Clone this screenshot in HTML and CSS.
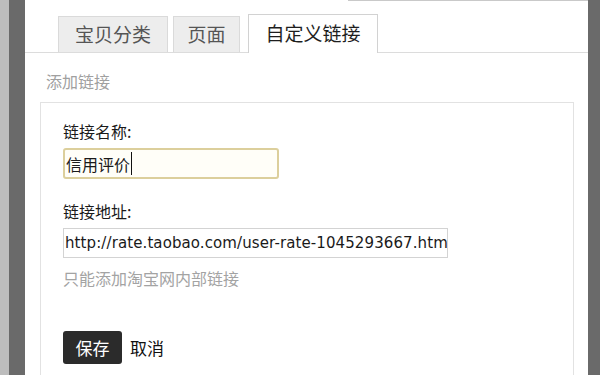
FILE: index.html
```html
<!DOCTYPE html>
<html lang="zh-CN">
<head>
<meta charset="utf-8">
<title>自定义链接</title>
<link rel="stylesheet" href="styles.css">
</head>
<body>
<div class="frame">
  <div class="edge-light"></div>
  <div class="edge-dark"></div>
  <div class="main">
    <div class="topline"></div>
    <div class="tabs">
      <div class="tab tab-a">宝贝分类</div>
      <div class="tab tab-b">页面</div>
      <div class="tab tab-active">自定义链接</div>
    </div>
    <div class="section-title">添加链接</div>
    <div class="panel">
      <div class="label">链接名称:</div>
      <div class="field field-focus"><span class="value">信用评价</span><span class="caret"></span></div>
      <div class="label label-2">链接地址:</div>
      <div class="field field-url"><span class="url">http://rate.taobao.com/user-rate-1045293667.html</span></div>
      <div class="hint">只能添加淘宝网内部链接</div>
      <div class="actions">
        <span class="btn-save">保存</span>
        <span class="btn-cancel">取消</span>
      </div>
    </div>
  </div>
  <div class="edge-right"></div>
</div>
</body>
</html>
```

FILE: styles.css
```css
html, body {
  margin: 0;
  padding: 0;
  width: 600px;
  height: 375px;
  overflow: hidden;
  background: #ffffff;
  font-family: "Noto Sans CJK SC", "Noto Sans", sans-serif;
}

.frame {
  display: flex;
  width: 600px;
  height: 375px;
}

.edge-light {
  width: 9px;
  background: #bdbdbd;
}

.edge-dark {
  width: 16px;
  background: #6a6a6a;
}

.edge-right {
  width: 12px;
  background: #6a6a6a;
}

.main {
  flex: 1;
  display: flex;
  flex-direction: column;
  background: #ffffff;
  overflow: hidden;
}

.topline {
  height: 1px;
  margin-left: 323px;
  background: #c9c9c9;
}

.tabs {
  display: flex;
  align-items: flex-end;
  margin-top: 13px;
  padding-left: 33px;
  border-bottom: 1px solid #dcdcdc;
  height: 38px;
}

.tab {
  box-sizing: border-box;
  height: 36px;
  border: 1px solid #dadada;
  border-bottom: none;
  background: #ededed;
  color: #555555;
  font-size: 19px;
  line-height: 34px;
  text-align: center;
}

.tab-a {
  width: 110px;
}

.tab-b {
  width: 67px;
  margin-left: 5px;
}

.tab-active {
  width: 130px;
  height: 39px;
  margin-left: 8px;
  margin-bottom: -1px;
  background: #ffffff;
  border-color: #d2d2d2;
  color: #1e1e1e;
  line-height: 36px;
}

.section-title {
  margin-top: 17px;
  padding-left: 21px;
  font-size: 16px;
  line-height: 22px;
  color: #a0a0a0;
}

.panel {
  margin: 10px 14px 0 15px;
  padding: 17px 0 0 22px;
  border: 1px solid #e2e2e2;
  border-bottom: none;
  flex: 1;
}

.label {
  font-size: 16px;
  line-height: 22px;
  color: #1a1a1a;
}

.label-2 {
  margin-top: 21px;
}

.field {
  box-sizing: border-box;
  margin-top: 6px;
  display: flex;
  align-items: center;
}

.field-focus {
  width: 216px;
  height: 31px;
  border: 2px solid #dccf9c;
  border-radius: 3px;
  background: #fffef8;
  padding-left: 1px;
  font-size: 16px;
  color: #1a1a1a;
}

.caret {
  width: 1px;
  height: 23px;
  background: #111111;
  margin-left: 1px;
}

.field-url {
  width: 385px;
  height: 30px;
  border: 1px solid #d3d3d3;
  padding-left: 1px;
  overflow: hidden;
  white-space: nowrap;
}

.url {
  font-family: "DejaVu Sans", Verdana, sans-serif;
  font-size: 15px;
  letter-spacing: 0.1px;
  color: #1a1a1a;
}

.hint {
  margin-top: 9px;
  font-size: 16px;
  line-height: 22px;
  color: #a3a3a3;
}

.actions {
  margin-top: 42px;
  display: flex;
  align-items: center;
  gap: 8px;
}

.btn-save {
  display: inline-block;
  width: 59px;
  height: 33px;
  line-height: 33px;
  text-align: center;
  background: #2b2b2b;
  border-radius: 3px;
  color: #ffffff;
  font-size: 17px;
}

.btn-cancel {
  font-size: 17px;
  color: #111111;
}
```
